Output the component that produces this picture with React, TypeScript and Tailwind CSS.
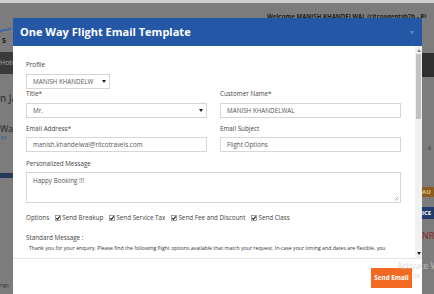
import type { ReactNode } from 'react'

// -----------------------------------------------------------------------------
// Small pieces
// -----------------------------------------------------------------------------

function Caret() {
  return (
    <svg width="4" height="3" viewBox="0 0 4 3" className="shrink-0">
      <path d="M0 0 L4 0 L2 3 Z" fill="#222" />
    </svg>
  )
}

function Check() {
  return (
    <svg width="6" height="6" viewBox="0 0 6 6" className="mr-[1px] shrink-0">
      <rect x="0.5" y="0.5" width="5" height="5" fill="#fff" stroke="#8a8a8a" strokeWidth="0.8" />
      <path d="M1.3 3.1 L2.5 4.3 L4.8 1.4" fill="none" stroke="#222" strokeWidth="1.1" />
    </svg>
  )
}

function Label({ children, className = '' }: { children: ReactNode; className?: string }) {
  return (
    <p className={['text-[6.3px] leading-[10px] text-[#444]', className].join(' ')}>
      {children}
    </p>
  )
}

function Field({ value, select, className = '' }: { value: string; select?: boolean; className?: string }) {
  return (
    <div
      className={[
        'flex h-[15px] items-center justify-between border border-[#d6d6d6] bg-white pl-[6px] pr-[3px] text-[6.3px] text-[#555]',
        className,
      ].join(' ')}
    >
      <span>{value}</span>
      {select && <Caret />}
    </div>
  )
}

function Option({ children }: { children: ReactNode }) {
  return (
    <span className="ml-[6px] flex items-center first:ml-[2px]">
      <Check />
      {children}
    </span>
  )
}

// -----------------------------------------------------------------------------
// Dimmed page behind the modal
// -----------------------------------------------------------------------------

function PaginaFundo() {
  return (
    <div className="flex h-full flex-col">
      <div className="h-[3px] bg-[#cfcfcf]" />
      <div className="flex h-[15px] overflow-hidden pl-[267px] pt-[9px]">
        <p className="whitespace-nowrap text-[6.1px] font-bold leading-[9px] text-[#1c1c1c]">
          Welcome MANISH KHANDELWAL (ritcoagentsb2b - RI
        </p>
      </div>
      <div className="flex flex-1">
        <div className="flex w-[13px] flex-col overflow-hidden">
          <svg width="12" height="6" viewBox="0 0 12 6" className="mt-[9px]">
            <path d="M0 5 C3 0 6 6 11 1" fill="none" stroke="#3d66a3" strokeWidth="2" />
          </svg>
          <p className="mt-[3px] pl-[2px] text-[8px] font-bold leading-[8px] text-[#222]">s</p>
          <div className="mt-[8px] flex h-[22px] items-center bg-[#3a3a3a] text-[7px] text-[#aaa]">
            Hote
          </div>
          <p className="mt-[19px] whitespace-nowrap text-[10px] leading-[10px] text-[#262626]">n Ja</p>
          <p className="mt-[21px] text-[9px] leading-[9px] text-[#262626]">Way</p>
          <p className="mt-[2px] pl-[1px] text-[5px] leading-[5px] text-[#3d5f99]">ge</p>
          <div className="mt-[33px] h-[5px] bg-[#27395a]" />
          <p className="mt-[104px] text-[5.5px] leading-[6px] text-[#333]">ngs</p>
        </div>
        <div className="flex-1" />
        <div className="flex w-[12px] flex-col overflow-hidden">
          <div className="mt-[35px] h-[24px] bg-[#2f2f2f]" />
          <p className="mt-[68px] pl-[6px] text-[5px] leading-[6px] text-[#333]">A</p>
          <div className="mt-[36px] flex h-[10px] items-center bg-[#8a5e1e] text-[6px] font-bold text-[#e5c48a]">
            AU
          </div>
          <div className="mt-[10px] flex h-[12px] items-center bg-[#233a6c] text-[6px] font-bold text-white">
            ICE
          </div>
          <p className="mt-[11px] text-[9px] leading-[12px] text-[#8a2424]">NR</p>
        </div>
      </div>
    </div>
  )
}

// -----------------------------------------------------------------------------
// Modal
// -----------------------------------------------------------------------------

export default function App() {
  return (
    <div className="relative h-[294px] w-[434px] overflow-hidden bg-[#7c7c7c] font-['Open_Sans',sans-serif]">
      <PaginaFundo />

      <div className="absolute left-[13px] top-[18px] flex h-[290px] w-[409px] flex-col bg-white">
        {/* Cabeçalho */}
        <div className="flex h-[28px] shrink-0 items-center justify-between bg-[#2557a7] pl-[7px] pr-[8px]">
          <h1 className="text-[11px] font-bold text-white">One Way Flight Email Template</h1>
          <span className="text-[7px] leading-none text-[#9fb2d6]">×</span>
        </div>

        {/* Corpo com rolagem */}
        <div className="flex h-[213px] shrink-0 border-b border-[#e6e6e6]">
          <div className="flex-1 overflow-hidden pl-[13px] pr-[14px] pt-[14px]">
            <Label className="mb-[4px]">Profile</Label>
            <Field value="MANISH KHANDELW" select className="h-[14px] w-[84px] uppercase" />

            <div className="grid grid-cols-2 gap-x-[13px]">
              <div>
                <Label className="mb-[4px]">Title*</Label>
                <Field value="Mr." select />
              </div>
              <div>
                <Label className="mb-[4px]">Customer Name*</Label>
                <Field value="MANISH KHANDELWAL" />
              </div>
              <div className="mt-[6px]">
                <Label className="mb-[3px]">Email Address*</Label>
                <Field value="manish.khandelwal@ritcotravels.com" />
              </div>
              <div className="mt-[6px]">
                <Label className="mb-[3px]">Email Subject</Label>
                <Field value="Flight Options" />
              </div>
            </div>

            <Label className="mb-[3px] mt-[7px]">Personalized Message</Label>
            <div className="relative h-[31px] border border-[#d6d6d6] pl-[6px] pt-[3px] text-[6.3px] text-[#555]">
              Happy Booking !!!
              <svg width="5" height="5" viewBox="0 0 5 5" className="absolute bottom-[1px] right-[1px]">
                <path d="M0.5 4.5 L4.5 0.5 M2.5 4.5 L4.5 2.5" stroke="#999" strokeWidth="0.7" />
              </svg>
            </div>

            <div className="mt-[10px] flex h-[10px] items-center text-[6.3px] text-[#444]">
              <span>Options</span>
              <Option>Send Breakup</Option>
              <Option>Send Service Tax</Option>
              <Option>Send Fee and Discount</Option>
              <Option>Send Class</Option>
            </div>

            <Label className="mt-[10px]">Standard Message :</Label>
            <p className="whitespace-nowrap pl-[3px] text-[5.2px] leading-[11px] text-[#333]">
              Thank you for your enquiry. Please find the following flight options available that match your request. In-case your timing and dates are flexible, you
            </p>
          </div>

          {/* Barra de rolagem */}
          <div className="flex w-[7px] flex-col items-center bg-[#f1f1f1] py-[3px]">
            <svg width="4" height="3" viewBox="0 0 4 3">
              <path d="M0 3 L4 3 L2 0 Z" fill="#888" />
            </svg>
            <div className="mt-[2px] h-[65px] w-[5px] bg-[#c2c2c2]" />
            <div className="flex-1" />
            <Caret />
          </div>
        </div>

        {/* Rodapé */}
        <div className="flex justify-end pr-[10px] pt-[9px]">
          <button
            type="button"
            className="h-[20px] w-[41px] bg-[#f26a22] text-[6.3px] font-bold text-white"
          >
            Send Email
          </button>
        </div>
      </div>

      {/* Marca d'água do Windows */}
      <div className="absolute left-[397px] top-[261px] w-[37px] overflow-hidden">
        <p className="whitespace-nowrap text-[8.5px] leading-[10px] text-[#cfcfcf]/80">Activate W</p>
        <p className="whitespace-nowrap pl-[16px] text-[7px] leading-[9px] text-[#cfcfcf]/80">Se</p>
      </div>
    </div>
  )
}
